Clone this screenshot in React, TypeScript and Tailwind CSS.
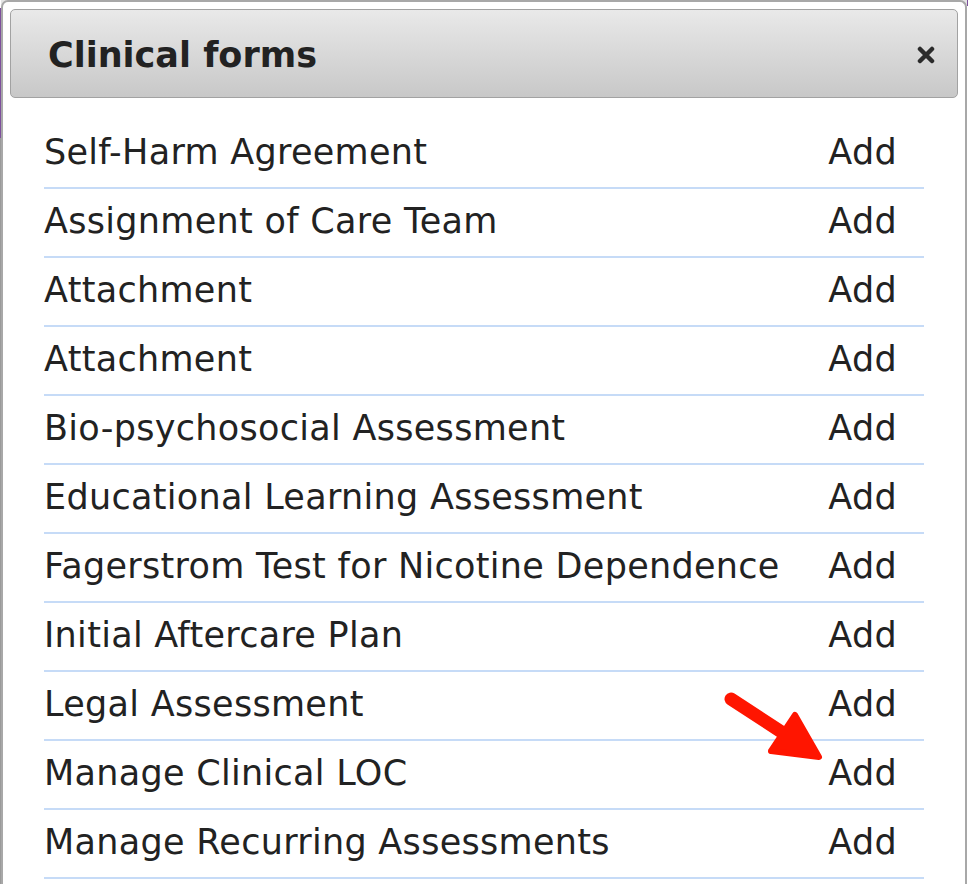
import React from "react";

const forms: string[] = [
  "Self-Harm Agreement",
  "Assignment of Care Team",
  "Attachment",
  "Attachment",
  "Bio-psychosocial Assessment",
  "Educational Learning Assessment",
  "Fagerstrom Test for Nicotine Dependence",
  "Initial Aftercare Plan",
  "Legal Assessment",
  "Manage Clinical LOC",
  "Manage Recurring Assessments",
];

const FormRow: React.FC<{ name: string }> = ({ name }) => (
  <li className="flex h-[69px] items-center justify-between border-b-2 border-[#c6dbf7] pb-[2px]">
    <span>{name}</span>
    <button className="pr-[27px] text-[#222]">Add</button>
  </li>
);

export default function App() {
  return (
    <div
      className="relative flex h-[884px] w-[968px] overflow-hidden bg-[#e5e5e5]"
      style={{ fontFamily: '"DejaVu Sans", Verdana, sans-serif' }}
    >
      {/* page behind the dialog */}
      <div className="flex w-[1px] flex-col">
        <div className="h-[8px] bg-white" />
        <div className="h-[130px] bg-[#7d4f9c]" />
        <div className="flex-1 bg-[#9a9a9a]" />
      </div>

      {/* dialog */}
      <div className="flex-1 rounded-t-[7px] border-2 border-b-0 border-[#a8a8a8] bg-white px-[7px] pt-[7px]">
        <div className="flex h-[89px] items-center justify-between rounded-[5px] border border-[#a2a2a2] bg-gradient-to-b from-[#e9e9e9] to-[#c8c8c8] pl-[37px] pr-[22px]">
          <h2 className="mt-[3px] text-[35px] font-bold text-[#222]">Clinical forms</h2>
          <svg width="18" height="18" viewBox="0 0 18 18" className="mt-[2px]">
            <path d="M3 3 L15 15 M15 3 L3 15" stroke="#2b2b2b" strokeWidth="4.5" strokeLinecap="round" />
          </svg>
        </div>

        <ul className="mx-[34px] mt-[22px] text-[35px] leading-none tracking-[0.3px] text-[#222]">
          {forms.map((f, i) => (
            <FormRow key={i} name={f} />
          ))}
        </ul>
      </div>

      <div className="flex w-[1px] flex-col">
        <div className="h-[6px] bg-[#7d4f9c]" />
        <div className="flex-1 bg-white" />
      </div>

      {/* annotation arrow */}
      <svg className="pointer-events-none absolute left-0 top-0" width="968" height="884">
        <line x1="731" y1="699" x2="806" y2="748" stroke="#ff1500" strokeWidth="13" strokeLinecap="round" />
        <polygon
          points="795,715 819,757 771,751"
          fill="#ff1500"
          stroke="#ff1500"
          strokeWidth="6"
          strokeLinejoin="round"
        />
      </svg>
    </div>
  );
}
